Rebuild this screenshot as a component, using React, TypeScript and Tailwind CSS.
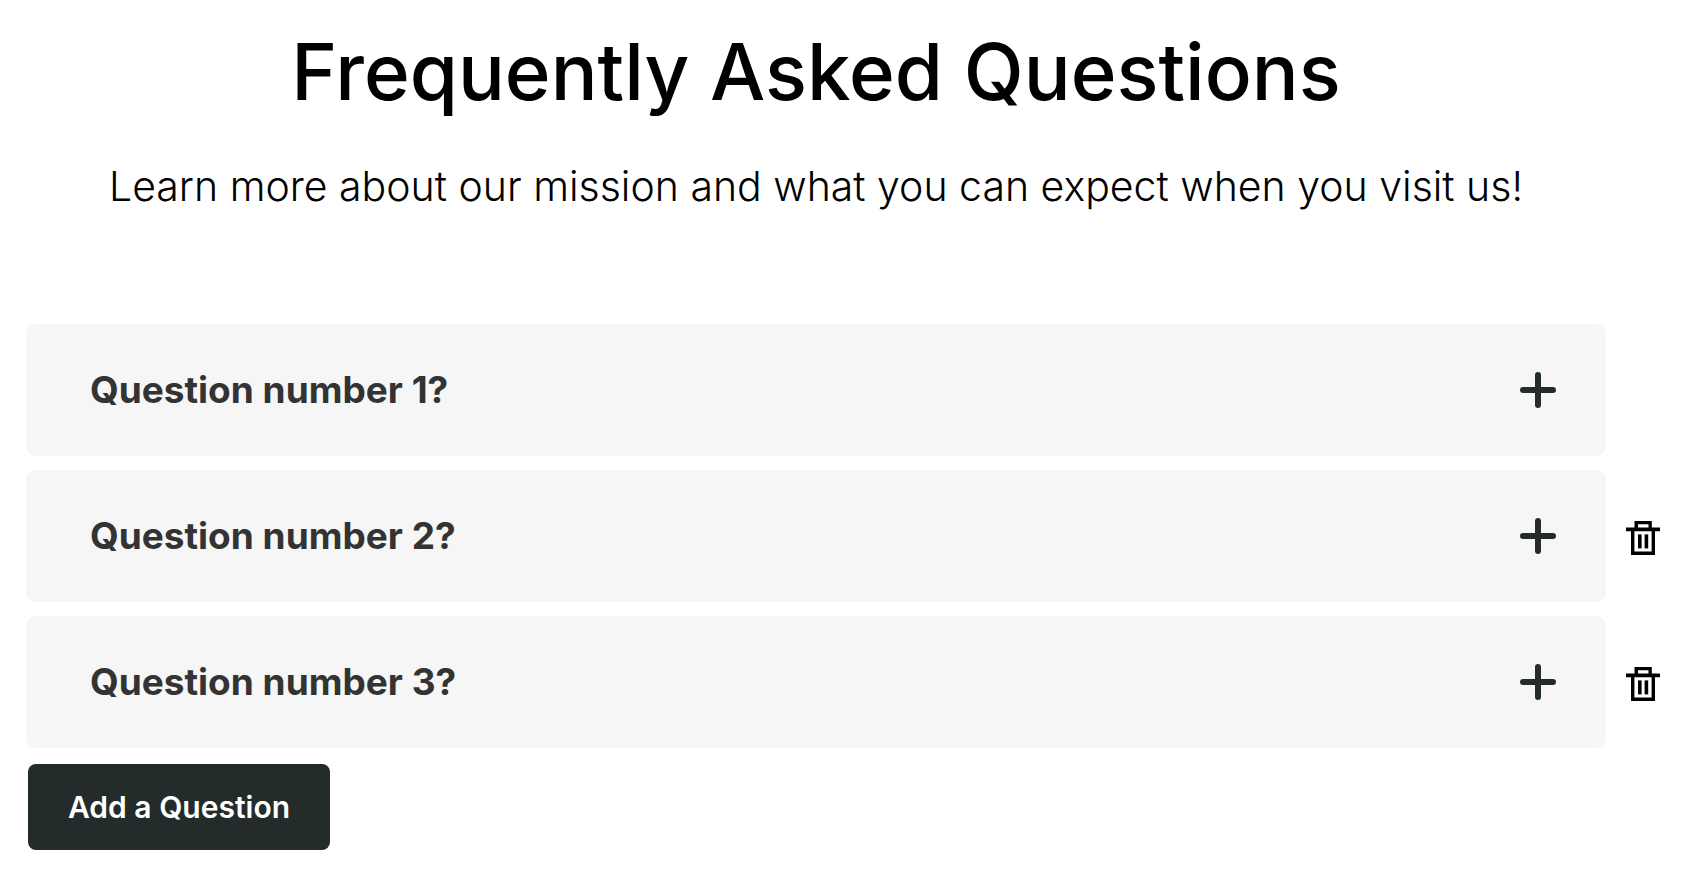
import React, { useState } from 'react';

interface Question {
  id: number;
  title: string;
}

const initialQuestions: Question[] = [
  { id: 1, title: 'Question number 1?' },
  { id: 2, title: 'Question number 2?' },
  { id: 3, title: 'Question number 3?' },
];

const PlusIcon: React.FC = () => (
  <svg className="w-9 h-9 shrink-0" viewBox="0 0 36 36" fill="#242c2b" aria-hidden="true">
    <rect x="15" y="0" width="6" height="36" rx="3" />
    <rect x="0" y="15" width="36" height="6" rx="3" />
  </svg>
);

const TrashIcon: React.FC = () => (
  <svg className="w-[34px] h-[38px]" viewBox="0 0 34 38" fill="black" aria-hidden="true">
    <path
      fillRule="evenodd"
      d="M8.5 4h17.3v6.6H34v3.6h-5V38H5V14.2H0v-3.6h8.5V4zM12 7.3v3.3h10.5V7.3H12zM8.4 14.2v20.4h17.2V14.2H8.4z"
    />
    <rect x="12" y="17.4" width="3.6" height="14" />
    <rect x="18.6" y="17.4" width="3.6" height="14" />
  </svg>
);

interface QuestionRowProps {
  question: Question;
  onDelete?: () => void;
}

const QuestionRow: React.FC<QuestionRowProps> = ({ question, onDelete }) => (
  <li className="flex items-center">
    <button
      type="button"
      className="flex-1 h-[132px] pl-16 pr-[50px] flex items-center justify-between rounded-[10px] bg-[#f6f6f6] text-left"
    >
      <span className="text-[37px] leading-[48px] font-bold text-[#333333]">{question.title}</span>
      <PlusIcon />
    </button>
    <div className="w-[100px] pl-5">
      {onDelete && (
        <button type="button" className="block" aria-label={`Delete ${question.title}`} onClick={onDelete}>
          <TrashIcon />
        </button>
      )}
    </div>
  </li>
);

export default function App() {
  const [questions, setQuestions] = useState<Question[]>(initialQuestions);

  const addQuestion = () => {
    const id = Math.max(0, ...questions.map((q) => q.id)) + 1;
    setQuestions([...questions, { id, title: `Question number ${id}?` }]);
  };

  const deleteQuestion = (id: number) => {
    setQuestions(questions.filter((q) => q.id !== id));
  };

  return (
    <main className="min-h-screen bg-white pl-[26px] pb-5 font-['Inter',sans-serif] text-black">
      <header className="pt-6 pr-[100px] pb-[108px] text-center">
        <h1 className="text-[78px] leading-[96px] font-medium">Frequently Asked Questions</h1>
        <p className="mt-9 text-[41px] leading-[60px] font-light">
          Learn more about our mission and what you can expect when you visit us!
        </p>
      </header>

      <ul className="flex flex-col gap-[14px]">
        {questions.map((question, index) => (
          <QuestionRow
            key={question.id}
            question={question}
            onDelete={index > 0 ? () => deleteQuestion(question.id) : undefined}
          />
        ))}
      </ul>

      <button
        type="button"
        onClick={addQuestion}
        className="mt-4 ml-[2px] h-[86px] px-10 rounded-lg bg-[#242c2b] text-[30px] leading-9 font-semibold text-white"
      >
        Add a Question
      </button>
    </main>
  );
}
